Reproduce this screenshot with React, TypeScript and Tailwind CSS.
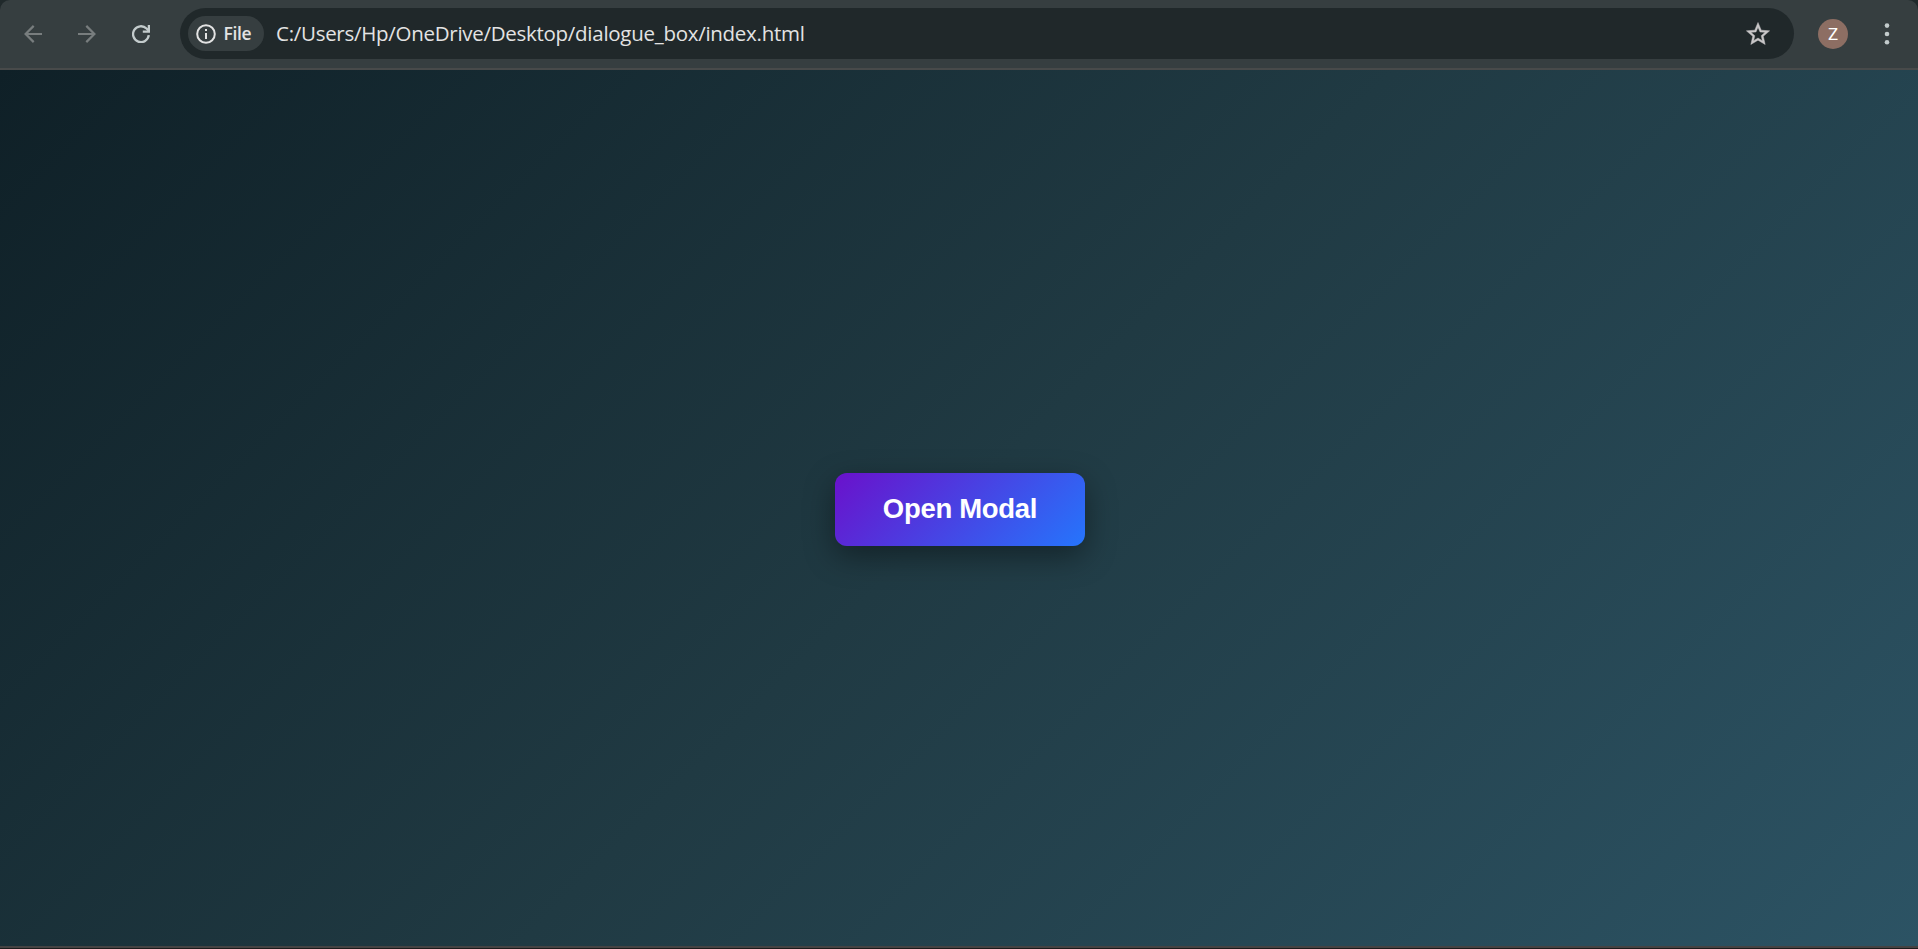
const ArrowIcon = ({ flip = false }: { flip?: boolean }) => (
  <svg viewBox="0 0 18 18" className={flip ? "size-[18px] -scale-x-100" : "size-[18px]"} fill="none" stroke="#787d7e" strokeWidth="2.2">
    <path d="M18 9H1.8M9.7 0.9L1.6 9l8.1 8.1" />
  </svg>
);

const ReloadIcon = () => (
  <svg viewBox="0 0 18 18" className="size-[18px]" fill="none" stroke="#c3cbcc" strokeWidth="2.3">
    <path d="M16.8 10.2A7.9 7.9 0 1 1 14.5 3.5L16.8 5.8" />
    <path d="M16.9 0v6.6h-6.1" />
  </svg>
);

const InfoIcon = () => (
  <svg viewBox="0 0 20 20" className="size-5 shrink-0" fill="none" stroke="#e3e3e3" strokeWidth="2">
    <circle cx="10" cy="10" r="8.8" />
    <path d="M10 9v6M10 5v2" />
  </svg>
);

const StarIcon = () => (
  <svg viewBox="1.7 1.6 20.6 19.8" className="h-[23px] w-6" fill="#c9c7c8" stroke="#c9c7c8" strokeWidth="0.4">
    <path d="M22 9.24l-7.19-.62L12 2 9.19 8.63 2 9.24l5.46 4.73L5.82 21 12 17.27 18.18 21l-1.63-7.03L22 9.24zM12 15.4l-3.76 2.27 1-4.28-3.32-2.88 4.38-.38L12 6.1l1.71 4.04 4.38.38-3.32 2.88 1 4.28L12 15.4z" />
  </svg>
);

const MenuIcon = () => (
  <svg viewBox="0 0 6 22" className="h-[22px] w-1.5" fill="#c3cbcc">
    <circle cx="3" cy="2.6" r="2.3" />
    <circle cx="3" cy="11" r="2.3" />
    <circle cx="3" cy="19.3" r="2.3" />
  </svg>
);

export default function App() {
  return (
    <div className="flex h-[949px] w-[1918px] flex-col overflow-hidden bg-[#1c1c1c]">
      <header className="h-[70px] shrink-0 bg-[#20292b]">
        <div className="flex h-full items-start rounded-t-[10px] border-b-2 border-[#484a4a] bg-[#363e40]">
          <nav className="mt-[25px] flex pl-6">
            <button aria-label="Back" className="mr-9"><ArrowIcon /></button>
            <button aria-label="Forward" className="mr-9"><ArrowIcon flip /></button>
            <button aria-label="Reload"><ReloadIcon /></button>
          </nav>
          <div className="mt-2 ml-[30px] flex h-[51px] w-[1614px] items-center rounded-full bg-[#20282a] pr-6 pl-2">
            <div className="flex h-[35px] w-[76px] items-center rounded-full bg-[#363e40] pl-[7.5px]">
              <InfoIcon />
              <span className="ml-2 font-['Open_Sans',sans-serif] text-[17.5px] leading-none font-semibold tracking-[-0.35px] text-[#e3e3e3]">File</span>
            </div>
            <span className="ml-3 grow font-['Open_Sans',sans-serif] text-[20.5px] leading-none tracking-[-0.28px] text-[#e3e3e3]">
              C:/Users/Hp/OneDrive/Desktop/dialogue_box/index.html
            </span>
            <StarIcon />
          </div>
          <div className="mt-[19px] ml-6 flex size-[30px] items-center justify-center rounded-full bg-[#8d6e63] font-['Roboto',sans-serif] text-[17px] leading-none text-white">Z</div>
          <button aria-label="Menu" className="mt-[23px] ml-9"><MenuIcon /></button>
        </div>
      </header>
      <main className="flex h-[876px] shrink-0 items-center justify-center bg-[linear-gradient(135deg,#0f2027,#203a43,#2c5364)] pt-[3px] pl-[2px]">
        <button className="h-[73px] w-[250px] rounded-[12px] bg-[linear-gradient(135deg,#6a11cb,#2575fc)] pb-[1px] font-['Liberation_Sans',sans-serif] text-[27.5px] leading-none font-bold tracking-[-0.3px] text-white shadow-[0_10px_31px_rgba(0,0,0,0.4)]">
          Open Modal
        </button>
      </main>
      <footer className="h-[2px] shrink-0 bg-[#454343]" />
    </div>
  );
}
